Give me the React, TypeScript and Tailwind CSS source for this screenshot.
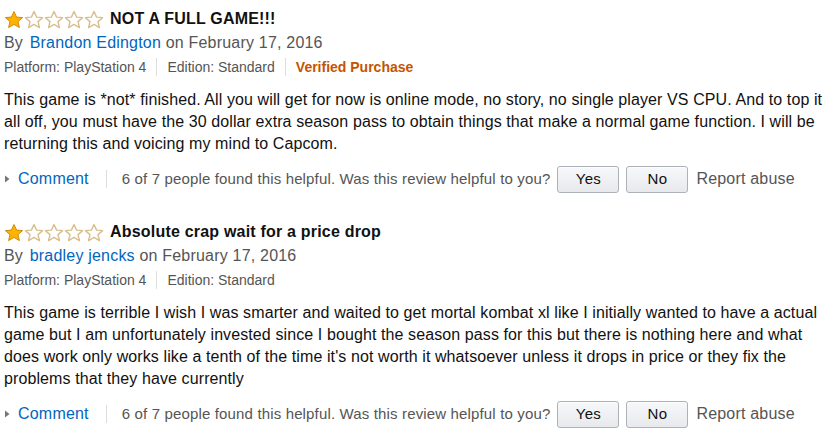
import React from 'react';

type Review = {
  title: string;
  author: string;
  date: string;
  verified: boolean;
  body: string;
  helpful: string;
};

const reviews: Review[] = [
  {
    title: 'NOT A FULL GAME!!!',
    author: 'Brandon Edington',
    date: 'February 17, 2016',
    verified: true,
    body: 'This game is *not* finished. All you will get for now is online mode, no story, no single player VS CPU. And to top it all off, you must have the 30 dollar extra season pass to obtain things that make a normal game function. I will be returning this and voicing my mind to Capcom.',
    helpful: '6 of 7 people found this helpful. Was this review helpful to you?'
  },
  {
    title: 'Absolute crap wait for a price drop',
    author: 'bradley jencks',
    date: 'February 17, 2016',
    verified: false,
    body: "This game is terrible I wish I was smarter and waited to get mortal kombat xl like I initially wanted to have a actual game but I am unfortunately invested since I bought the season pass for this but there is nothing here and what does work only works like a tenth of the time it's not worth it whatsoever unless it drops in price or they fix the problems that they have currently",
    helpful: '6 of 7 people found this helpful. Was this review helpful to you?'
  }
];

const STAR = '10,1.5 12.6,7.1 18.6,7.6 14,11.6 15.4,17.6 10,14.4 4.6,17.6 6,11.6 1.4,7.6 7.4,7.1';

const Stars = ({ count }: { count: number }) => (
  <div className="flex items-center">
    {[0, 1, 2, 3, 4].map((i) => (
      <svg key={i} width="20" height="19" viewBox="0 0 20 19">
        {i < count ? (
          <polygon points={STAR} fill="#ffb300" stroke="#d18b0c" strokeWidth="1" strokeLinejoin="round" />
        ) : (
          <polygon points={STAR} fill="#fff" stroke="#d8bf8e" strokeWidth="1.4" strokeLinejoin="round" />
        )}
      </svg>
    ))}
  </div>
);

const Divider = () => <span className="mx-[10px] inline-block h-[18px] w-px bg-[#dddddd]" />;

const Button = ({ label }: { label: string }) => (
  <button className="flex h-[27px] w-[62px] items-center justify-center rounded-[3px] border border-[#adb1b8] bg-gradient-to-b from-[#f7f8fa] to-[#e7e9ec] text-[15px] text-[#111] shadow-[0_1px_0_rgba(255,255,255,0.6)_inset]">
    {label}
  </button>
);

const ReviewItem = ({ review }: { review: Review }) => (
  <div className="pt-[7px] pb-[19px]">
    <div className="flex h-6 items-center">
      <Stars count={1} />
      <span className="ml-[6px] text-[16px] font-bold tracking-[0.2px] text-[#111]">{review.title}</span>
    </div>
    <div className="h-6 text-[16px] leading-6 tracking-[0.2px] text-[#555]">
      By <a className="ml-[2px] text-[#0066c0]">{review.author}</a> on {review.date}
    </div>
    <div className="flex h-6 items-center text-[14px] text-[#555]">
      <span>Platform: PlayStation 4</span>
      <Divider />
      <span>Edition: Standard</span>
      {review.verified && (
        <>
          <Divider />
          <span className="font-bold text-[#c45500]">Verified Purchase</span>
        </>
      )}
    </div>
    <p className="mt-[10px] text-[16px] leading-[22px] tracking-[0.1px] text-[#111]">{review.body}</p>
    <div className="mt-[9px] flex h-[30px] items-center text-[16px] tracking-[0.2px]">
      <svg width="5" height="8" viewBox="0 0 5 8" className="ml-[1px] mr-[8px]">
        <polygon points="0,0.5 4.5,4 0,7.5" fill="#777" />
      </svg>
      <a className="text-[#0066c0]">Comment</a>
      <span className="ml-[17px] mr-[15px] inline-block h-[18px] w-px bg-[#dddddd]" />
      <span className="text-[15px] tracking-[0.15px] text-[#555]">{review.helpful}</span>
      <div className="ml-[7px] flex gap-[7px]">
        <Button label="Yes" />
        <Button label="No" />
      </div>
      <span className="ml-[8px] text-[#555]">Report abuse</span>
    </div>
  </div>
);

export default function App() {
  return (
    <div className="w-[837px] bg-white pl-[4px] font-['Liberation_Sans',Arial,sans-serif]">
      {reviews.map((r, i) => (
        <ReviewItem key={i} review={r} />
      ))}
    </div>
  );
}
